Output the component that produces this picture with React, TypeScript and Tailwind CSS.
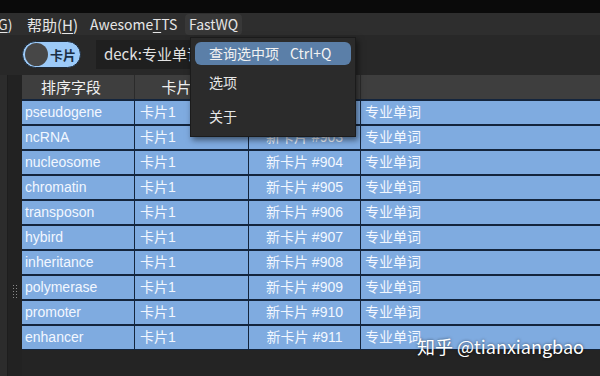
const rows = [
  ["pseudogene", "#902"],
  ["ncRNA", "#903"],
  ["nucleosome", "#904"],
  ["chromatin", "#905"],
  ["transposon", "#906"],
  ["hybird", "#907"],
  ["inheritance", "#908"],
  ["polymerase", "#909"],
  ["promoter", "#910"],
  ["enhancer", "#911"],
];

const ui = { fontFamily: '"Noto Sans CJK SC", "Noto Sans", sans-serif' };
const table = { fontFamily: '"Liberation Sans", "Noto Sans CJK SC", sans-serif' };

export default function App() {
  return (
    <div className="relative h-[376px] w-[600px] overflow-hidden bg-[#262626] text-[#e6e6e6]" style={ui}>
      <div className="h-[13px] bg-[#0a0a0a]" />

      {/* menu bar */}
      <div className="flex h-[22px] items-center bg-[#2e2e2e] text-[14px] leading-none">
        <span className="ml-[-2px] w-[29px]">
          <span className="underline underline-offset-2">G</span>)
        </span>
        <span className="w-[63px] text-[15px]">
          帮助(<span className="underline underline-offset-2">H</span>)
        </span>
        <span className="w-[99px]">
          Awesome<span className="underline underline-offset-2">T</span>TS
        </span>
        <span className="ml-[-4px] flex h-[21px] items-center rounded-sm bg-[#383838] px-[4px]">FastWQ</span>
      </div>

      {/* toolbar */}
      <div className="flex h-[40px] items-center bg-[#282828] pb-[1px] pl-[22px]">
        <div className="flex h-[27px] w-[59px] items-center gap-[2px] rounded-full border border-[#1c2a3a] bg-[#9ccaf8] pl-[2px]">
          <div className="h-[23px] w-[23px] rounded-full bg-[#474747]" />
          <span className="text-[13px] font-bold text-[#1b2f45]">卡片</span>
        </div>
        <div className="ml-[15px] flex h-[29px] w-[200px] items-center bg-[#1f1f1f] pl-[8px] text-[15px] text-[#e2e2e2]">
          deck:专业单词
        </div>
      </div>

      <div className="flex h-[301px]">
        {/* left gutter */}
        <div className="flex w-[22px] shrink-0">
          <div className="w-[8px] border-r border-[#1d1d1d] bg-[#2c2c2c]" />
          <div className="flex flex-1 flex-col items-center bg-[#222222] pt-[210px]">
            <div className="grid grid-cols-2 gap-[2px]">
              {Array.from({ length: 10 }).map((_, i) => (
                <div key={i} className="h-[1px] w-[1px] bg-[#8a8a8a]" />
              ))}
            </div>
          </div>
        </div>

        {/* table */}
        <div className="flex-1 bg-[#242424]" style={table}>
          <div className="grid h-[24px] grid-cols-[113px_114px_112px_1fr] bg-[#3e3e3e] text-[15px] text-[#f0f0f0]" style={ui}>
            <div className="flex items-center justify-center border-r border-[#2b2b2b] pr-[14px]">排序字段</div>
            <div className="flex items-center justify-center border-r border-[#2b2b2b]">卡片模板</div>
            <div className="border-r border-[#2b2b2b]" />
            <div />
          </div>
          {rows.map(([word, num]) => (
            <div
              key={word}
              className="grid h-[25px] grid-cols-[113px_114px_112px_1fr] border-t-2 border-[#14253d] bg-[#7fabe0] text-[14px] text-[#f2f7ff]"
            >
              <div className="flex items-center border-r border-[#14253d] pl-[3px]">{word}</div>
              <div className="flex items-center border-r border-[#14253d] pl-[5px]">卡片1</div>
              <div className="flex items-center justify-center border-r border-[#14253d]">新卡片 {num}</div>
              <div className="flex items-center pl-[4px]">专业单词</div>
            </div>
          ))}
          <div className="h-[1px] bg-[#14253d]" />
        </div>
      </div>

      {/* FastWQ dropdown */}
      <div className="absolute left-[190px] top-[37px] h-[100px] w-[166px] border border-[#1b1b1b] bg-[#2b2b2b] px-[4px] pt-[4px] text-[14px] shadow-[2px_3px_6px_rgba(0,0,0,0.5)]">
        <div className="flex h-[23px] items-center rounded-md bg-[#5b7fa8] pl-[14px] text-[#f2f2f2]">
          <span>查询选中项</span>
          <span className="ml-[11px]">Ctrl+Q</span>
        </div>
        <div className="flex h-[34px] items-center pl-[14px]">选项</div>
        <div className="flex h-[34px] items-center pl-[14px]">关于</div>
      </div>

      {/* watermark */}
      <div className="absolute left-[417px] top-[333px] text-[18px] text-white [text-shadow:0_0_3px_rgba(0,0,0,0.6)]">
        知乎 @tianxiangbao
      </div>
    </div>
  );
}
